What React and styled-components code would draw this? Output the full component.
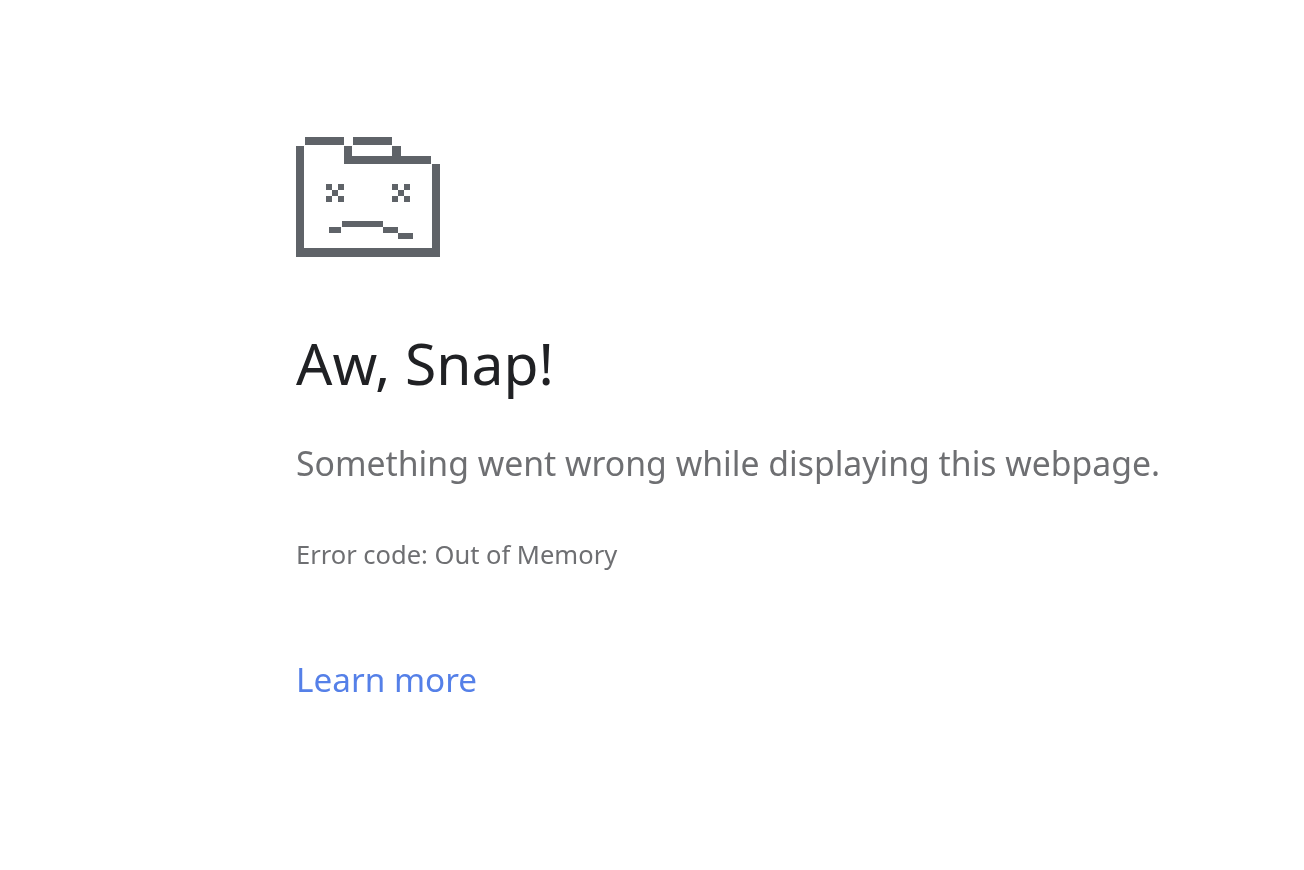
import React from 'react'
import styled, { createGlobalStyle } from 'styled-components'

const GlobalStyle = createGlobalStyle`
    html, body {
        margin: 0;
        padding: 0;
        background-color: #FFFFFF;
        font-family: "Noto Sans", "Open Sans", sans-serif;
    }
`

const Page = styled.main`
    box-sizing: border-box;
    height: 870px;
    padding: 137px 0 0 296px;
    overflow: hidden;
    filter: blur(0.35px);
`

const Icon = styled.svg`
    display: block;
    width: 144px;
    height: 120px;
    color: #5F6368;
`

const Title = styled.h1`
    margin: 72px 0 0;
    font-size: 57px;
    font-weight: 400;
    line-height: 68px;
    color: #202124;
`

const Message = styled.p`
    margin: 42px 0 0;
    font-size: 33.75px;
    line-height: 48px;
    color: #6E6F72;
`

const ErrorCode = styled.p`
    margin: 50px 0 0;
    font-size: 25.5px;
    line-height: 34px;
    color: #6E6F72;
`

const LearnMore = styled.a`
    display: block;
    margin-top: 84px;
    font-size: 33.3px;
    line-height: 48px;
    color: #5580E8;
    text-decoration: none;
`

function SadFolder() {
    return (
        <Icon viewBox="0 0 144 120" fill="currentColor" aria-hidden="true">
            <path d="M9 0h39v8H9zM57 0h39v8H57z" />
            <path d="M0 9h8v102h128V27h8v93H0z" />
            <path d="M48 9h8v10h40V9h9v10h30v8H48z" />
            <path d="M30 47h6v6h-6zM42 47h6v6h-6zM36 53h6v6h-6zM30 59h6v6h-6zM42 59h6v6h-6z" />
            <path d="M96 47h6v6h-6zM108 47h6v6h-6zM102 53h6v6h-6zM96 59h6v6h-6zM108 59h6v6h-6z" />
            <path d="M33 90h12v6H33zM46 84h41v6H46zM87 90h15v6H87zM102 96h15v6h-15z" />
        </Icon>
    )
}

export default function App() {
    return (
        <Page>
            <GlobalStyle />
            <SadFolder />
            <Title>Aw, Snap!</Title>
            <Message>Something went wrong while displaying this webpage.</Message>
            <ErrorCode>Error code: Out of Memory</ErrorCode>
            <LearnMore href="#">Learn more</LearnMore>
        </Page>
    )
}
